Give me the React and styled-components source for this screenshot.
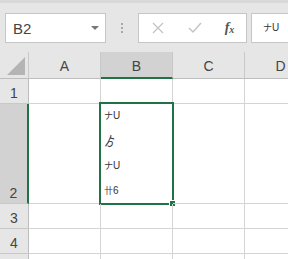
import React from "react";
import styled, { createGlobalStyle } from "styled-components";

const GlobalStyle = createGlobalStyle`
  html, body {
    margin: 0;
    padding: 0;
    background: #e6e6e6;
  }
  body {
    font-family: "Liberation Sans", Arial, sans-serif;
    color: #444;
  }
`;

// each entry: [cjk part, latin part, size of cjk part]
const CELL_TEXT = [
  ["ナ", "U", 9],
  ["ゟ", "", 12],
  ["ナ", "U", 9],
  ["卄", "6", 9],
];

function Kana({ parts }) {
  return (
    <KanaWrap>
      <KanaMain $size={parts[2]}>{parts[0]}</KanaMain>
      {parts[1] && <KanaTail>{parts[1]}</KanaTail>}
    </KanaWrap>
  );
}

export default function App() {
  return (
    <Window>
      <GlobalStyle />
      <FormulaBar>
        <NameBox>
          <span>B2</span>
          <Caret />
        </NameBox>
        <Grip>
          <i />
          <i />
          <i />
        </Grip>
        <FxButtons>
          <FxIcon>
            <svg width="12" height="12" viewBox="0 0 12 12">
              <path d="M1 1 L11 11 M11 1 L1 11" stroke="#c4c4c4" strokeWidth="1.3" fill="none" />
            </svg>
          </FxIcon>
          <FxIcon>
            <svg width="14" height="12" viewBox="0 0 14 12">
              <path d="M1 6 L5 10 L13 1" stroke="#c4c4c4" strokeWidth="1.5" fill="none" />
            </svg>
          </FxIcon>
          <FxLabel>
            f<sub>x</sub>
          </FxLabel>
        </FxButtons>
        <FormulaInput>
          <Kana parts={CELL_TEXT[0]} />
        </FormulaInput>
      </FormulaBar>

      <Sheet>
        <Corner>
          <Triangle />
        </Corner>
        <ColHead>A</ColHead>
        <ColHead $active>B</ColHead>
        <ColHead>C</ColHead>
        <ColHead>D</ColHead>

        <RowHead>1</RowHead>
        <Cell />
        <Cell />
        <Cell />
        <Cell />

        <RowHead $active>2</RowHead>
        <Cell />
        <Cell>
          <CellText>
            {CELL_TEXT.map((t, i) => (
              <Line key={i}>
                <Kana parts={t} />
              </Line>
            ))}
          </CellText>
          <Selection />
          <Handle />
        </Cell>
        <Cell />
        <Cell />

        <RowHead>3</RowHead>
        <Cell />
        <Cell />
        <Cell />
        <Cell />

        <RowHead>4</RowHead>
        <Cell />
        <Cell />
        <Cell />
        <Cell />

        <RowHead />
        <Cell />
        <Cell />
        <Cell />
        <Cell />
      </Sheet>
    </Window>
  );
}

const Window = styled.div`
  width: 288px;
  height: 259px;
  overflow: hidden;
  background: #e6e6e6;
  border-top: 3px solid #d9d9d9;
  box-sizing: border-box;
`;

const FormulaBar = styled.div`
  display: flex;
  align-items: center;
  height: 30px;
  margin-top: 10px;
  padding-left: 5px;
  margin-bottom: 9px;
`;

const NameBox = styled.div`
  width: 101px;
  height: 30px;
  box-sizing: border-box;
  background: #fff;
  border: 1px solid #c6c6c6;
  display: flex;
  align-items: center;
  justify-content: space-between;
  padding: 0 6px 0 7px;
  font-size: 15px;
  color: #444;
`;

const Caret = styled.span`
  width: 0;
  height: 0;
  border-left: 4px solid transparent;
  border-right: 4px solid transparent;
  border-top: 4px solid #777;
`;

const Grip = styled.div`
  width: 32px;
  display: flex;
  flex-direction: column;
  align-items: center;
  gap: 2px;
  i {
    width: 2px;
    height: 2px;
    background: #a8a8a8;
  }
`;

const FxButtons = styled.div`
  width: 109px;
  height: 30px;
  box-sizing: border-box;
  background: #fff;
  border: 1px solid #c6c6c6;
  display: grid;
  grid-template-columns: 36px 37px 1fr;
  align-items: center;
  justify-items: center;
  padding-left: 1px;
  margin-right: 4px;
`;

const FxIcon = styled.span`
  display: flex;
`;

const FxLabel = styled.span`
  font-family: "Liberation Serif", serif;
  font-style: italic;
  font-weight: bold;
  font-size: 14px;
  color: #555;
  sub {
    font-size: 10px;
    vertical-align: -1px;
  }
`;

const FormulaInput = styled.div`
  flex: 1;
  height: 30px;
  box-sizing: border-box;
  background: #fff;
  border: 1px solid #c6c6c6;
  border-right: none;
  display: flex;
  align-items: center;
  padding-left: 11px;
  color: #444;
`;

const Sheet = styled.div`
  display: grid;
  grid-template-columns: 29px 72px 72px 72px 72px;
  grid-template-rows: 27px 25px 100px 25px 25px 25px;
  background: #fff;
`;

const Corner = styled.div`
  background: #e6e6e6;
  border-right: 1px solid #c8c8c8;
  border-bottom: 1px solid #bdbdbd;
  display: flex;
  align-items: flex-end;
  justify-content: flex-end;
  padding: 0 3px 3px 0;
`;

const Triangle = styled.span`
  width: 0;
  height: 0;
  border-left: 18px solid transparent;
  border-bottom: 18px solid #b4b4b4;
`;

const ColHead = styled.div`
  background: ${(p) => (p.$active ? "#d2d2d2" : "#e6e6e6")};
  border-right: 1px solid #c8c8c8;
  border-bottom: ${(p) => (p.$active ? "2px solid #217346" : "1px solid #bdbdbd")};
  display: flex;
  align-items: center;
  justify-content: center;
  font-size: 14px;
  color: #444;
  padding-top: 2px;
`;

const RowHead = styled.div`
  background: ${(p) => (p.$active ? "#d2d2d2" : "#e6e6e6")};
  border-right: ${(p) => (p.$active ? "2px solid #217346" : "1px solid #bdbdbd")};
  border-bottom: 1px solid #c8c8c8;
  display: flex;
  align-items: flex-end;
  justify-content: center;
  padding-bottom: 2px;
  font-size: 14px;
  color: #444;
`;

const Cell = styled.div`
  position: relative;
  border-right: 1px solid #d4d4d4;
  border-bottom: 1px solid #d4d4d4;
`;

const CellText = styled.div`
  position: absolute;
  left: 3px;
  bottom: 0;
`;

const Line = styled.div`
  height: 25px;
  display: flex;
  align-items: center;
`;

const KanaWrap = styled.span`
  display: inline-flex;
  align-items: baseline;
  color: #333;
`;

const KanaMain = styled.span`
  font-family: "Noto Sans CJK JP", sans-serif;
  font-size: ${(p) => p.$size}px;
  line-height: 12px;
`;

const KanaTail = styled.span`
  font-family: "Liberation Sans", sans-serif;
  font-size: 10px;
  line-height: 12px;
`;

const Selection = styled.div`
  position: absolute;
  top: -2px;
  left: -2px;
  right: -2px;
  bottom: -2px;
  border: 2px solid #217346;
  pointer-events: none;
`;

const Handle = styled.div`
  position: absolute;
  right: -4px;
  bottom: -4px;
  width: 5px;
  height: 5px;
  background: #217346;
  border: 1px solid #fff;
`;
